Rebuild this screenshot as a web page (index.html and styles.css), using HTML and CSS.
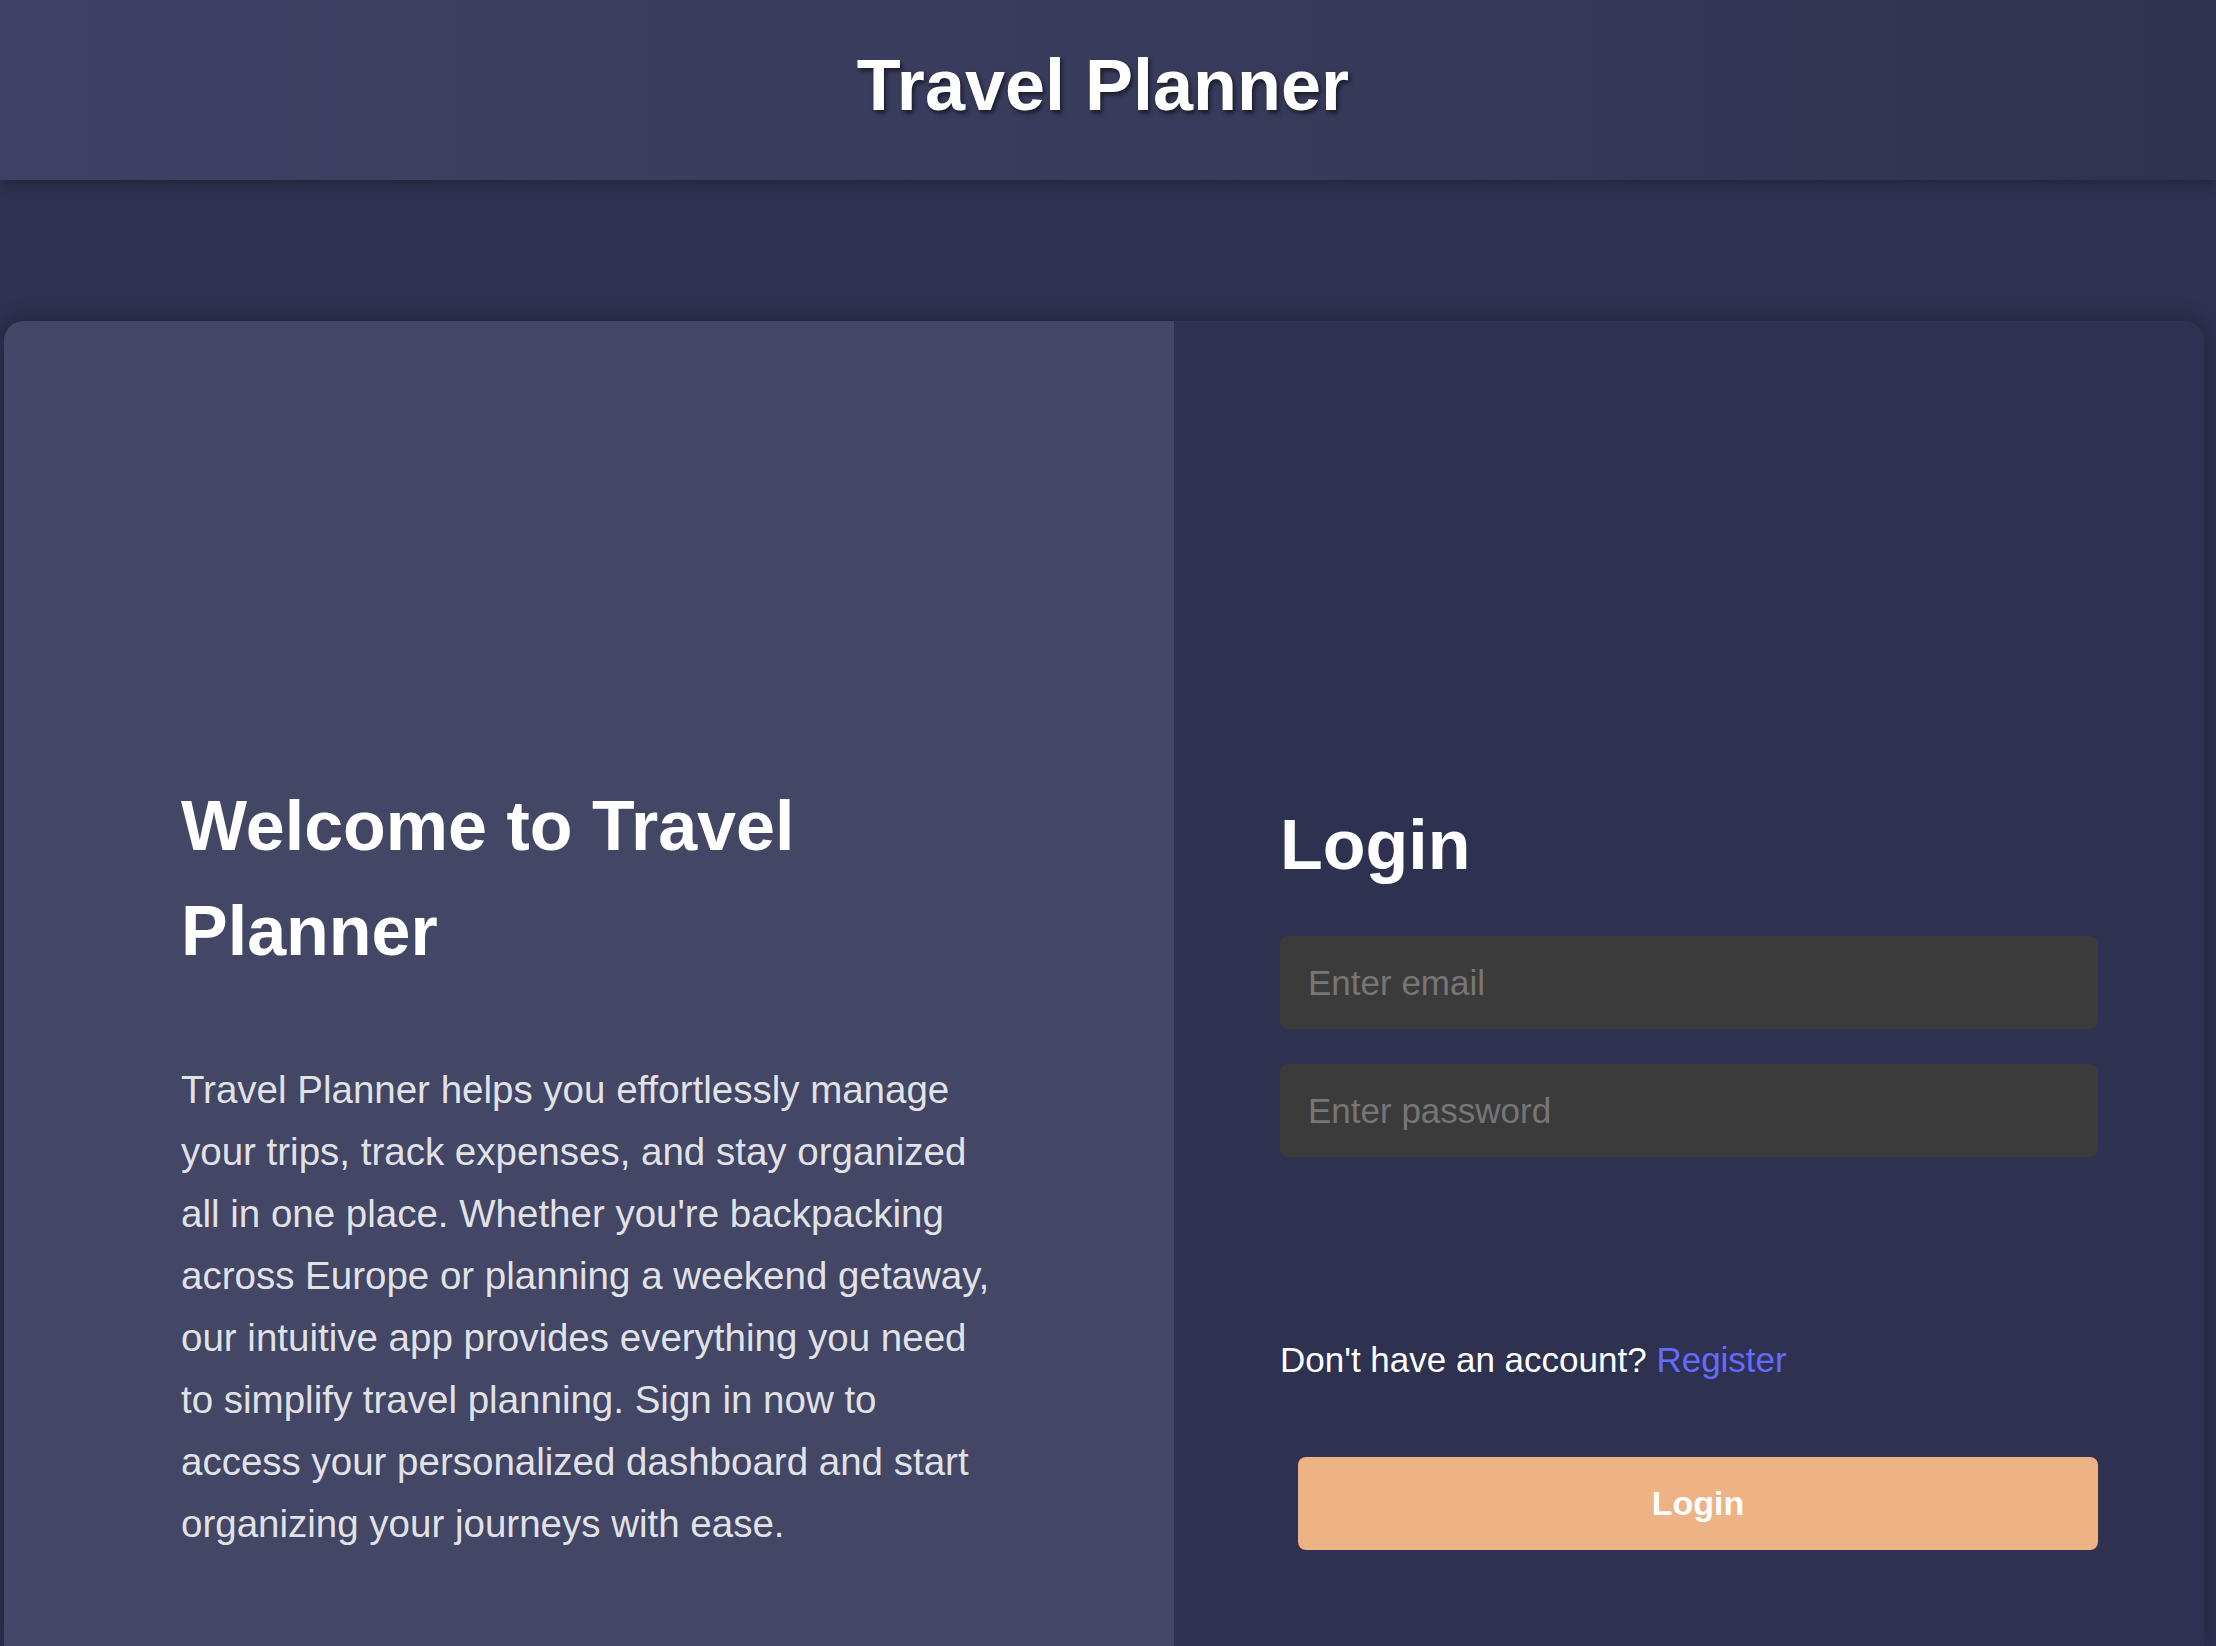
FILE: index.html
```html
<!DOCTYPE html>
<html lang="en">
<head>
<meta charset="utf-8">
<title>Travel Planner</title>
<link rel="stylesheet" href="styles.css">
</head>
<body>
  <header class="topbar">
    <h1 class="brand">Travel Planner</h1>
  </header>
  <main class="stage">
    <section class="card">
      <div class="intro">
        <h2 class="intro-title">Welcome to Travel Planner</h2>
        <p class="intro-text">Travel Planner helps you effortlessly manage your trips, track expenses, and stay organized all in one place. Whether you're backpacking across Europe or planning a weekend getaway, our intuitive app provides everything you need to simplify travel planning. Sign in now to access your personalized dashboard and start organizing your journeys with ease.</p>
      </div>
      <div class="auth">
        <h2 class="auth-title">Login</h2>
        <form class="auth-form">
          <input class="field" type="email" placeholder="Enter email">
          <input class="field" type="password" placeholder="Enter password">
          <p class="signup">Don't have an account? <a class="signup-link" href="#">Register</a></p>
          <button class="submit" type="button">Login</button>
        </form>
      </div>
    </section>
  </main>
</body>
</html>
```
FILE: styles.css
```css
html, body {
  margin: 0;
  padding: 0;
  height: 100%;
  overflow: hidden;
}

body {
  background: #2e3150;
  font-family: "Liberation Sans", Arial, Helvetica, sans-serif;
  color: #ffffff;
}

.topbar {
  position: relative;
  z-index: 2;
  box-sizing: border-box;
  height: 180px;
  padding: 45px 10px 0 0;
  background: linear-gradient(90deg, #3e4163 0%, #383b5b 50%, #30334f 100%);
  box-shadow: 0 4px 12px rgba(0, 0, 0, 0.25);
  text-align: center;
}

.brand {
  margin: 0;
  font-size: 72px;
  line-height: 80px;
  font-weight: 700;
  color: #ffffff;
  text-shadow: 2px 3px 4px rgba(0, 0, 0, 0.55);
}

.stage {
  padding-top: 141px;
}

.card {
  display: flex;
  width: 2200px;
  height: calc(100vh - 321px);
  margin-left: 4px;
  border-radius: 20px 20px 0 0;
  overflow: hidden;
  box-shadow: 0 0 22px rgba(0, 0, 0, 0.3);
}

.intro {
  box-sizing: border-box;
  width: 1170px;
  flex: none;
  padding: 453px 171px 0 177px;
  background: #434665;
}

.intro-title {
  margin: 0;
  font-size: 70px;
  line-height: 105px;
  font-weight: 700;
  color: #ffffff;
}

.intro-text {
  margin: 75px 0 0;
  font-size: 38.5px;
  line-height: 62px;
  color: rgba(255, 255, 255, 0.86);
}

.auth {
  box-sizing: border-box;
  flex: 1;
  padding: 472px 106px 0 106px;
  background: #2e3150;
}

.auth-title {
  margin: 0;
  font-size: 70px;
  line-height: 105px;
  font-weight: 700;
  color: #ffffff;
}

.auth-form {
  display: flex;
  flex-direction: column;
  margin-top: 38px;
}

.field {
  box-sizing: border-box;
  width: 100%;
  height: 93px;
  margin: 0 0 35px;
  padding: 0 28px;
  border: none;
  border-radius: 8px;
  background: #3b3b3b;
  font-family: "Liberation Sans", Arial, Helvetica, sans-serif;
  font-size: 35px;
  color: #ffffff;
  outline: none;
}

.field::placeholder {
  color: #767676;
}

.signup {
  margin: 142px 0 0;
  font-size: 35px;
  line-height: 52px;
  color: #ffffff;
}

.signup-link {
  color: #646cff;
  text-decoration: none;
}

.submit {
  box-sizing: border-box;
  height: 93px;
  margin: 71px 0 0 18px;
  border: none;
  border-radius: 8px;
  background: #eeb385;
  font-family: "Liberation Sans", Arial, Helvetica, sans-serif;
  font-size: 34px;
  font-weight: 700;
  color: #ffffff;
  cursor: pointer;
}
```
